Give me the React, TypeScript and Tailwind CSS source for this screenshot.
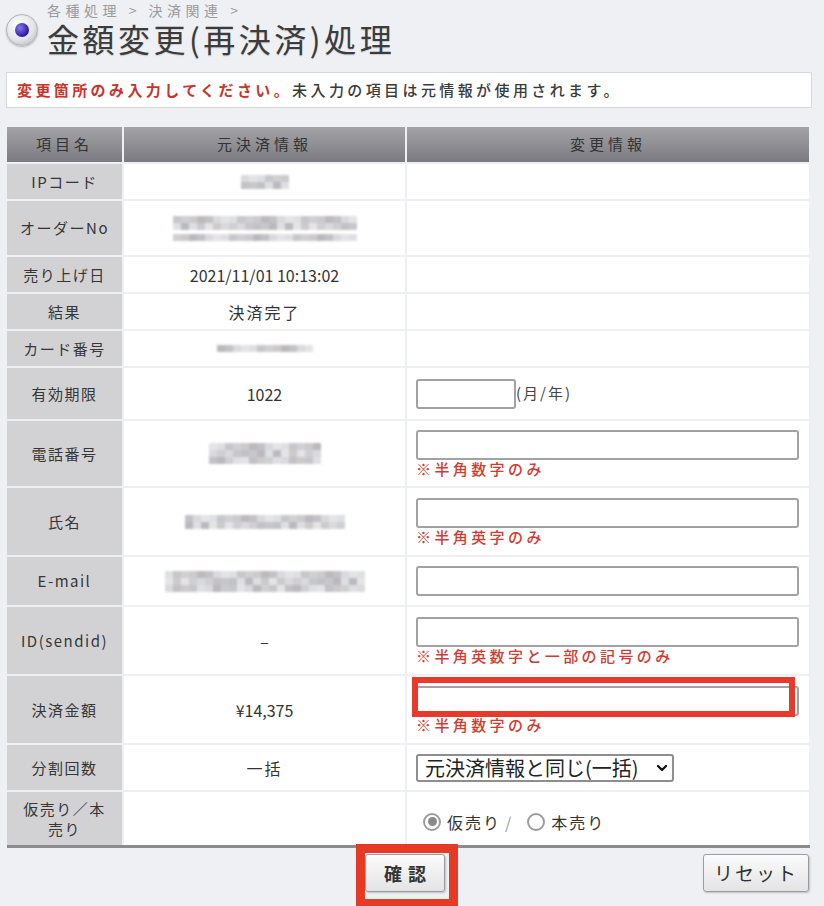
import React from 'react';
import { ChevronDown } from 'lucide-react';

const shades = ['#d6d6da', '#c2c1c6', '#b4b2b8', '#e2e2e5', '#cbcbcf', '#bcbbc0', '#dadde0', '#c8c6c4'];

// pixelated redaction block
const Mosaic = ({ cols, rows, offset = 0 }: { cols: number; rows: number; offset?: number }) => (
  <div className="flex flex-col blur-[0.8px] opacity-90">
    {Array.from({ length: rows }).map((_, r) => (
      <div key={r} className="flex">
        {Array.from({ length: cols }).map((__, c) => (
          <div
            key={c}
            className="w-[8px] h-[7px]"
            style={{ background: shades[(c * 3 + r * 5 + offset + ((c * r) % 3)) % shades.length] }}
          />
        ))}
      </div>
    ))}
  </div>
);

const Label = ({ h, children }: { h: string; children: React.ReactNode }) => (
  <div className={`${h} bg-[#d2d2d4] flex items-center justify-center text-center text-[15px] leading-[20px] tracking-[1.5px] text-[#363636] whitespace-nowrap`}>
    {children}
  </div>
);

const Value = ({ children }: { children?: React.ReactNode }) => (
  <div className="bg-white flex items-center justify-center text-[16px] text-[#333]">{children}</div>
);

const Change = ({ children }: { children?: React.ReactNode }) => (
  <div className="bg-white flex flex-col justify-center items-start pl-[9px]">{children}</div>
);

const TextBox = ({ className = 'w-[383px]' }: { className?: string }) => (
  <input
    type="text"
    className={`${className} h-[30px] bg-white border-2 border-[#a2a2a4] rounded-[3px] outline-none`}
  />
);

const Note = ({ children }: { children: React.ReactNode }) => (
  <div className="text-[15px] leading-[17px] tracking-[3.4px] text-[#d23a32] font-medium">{children}</div>
);

const Radio = ({ checked }: { checked?: boolean }) => (
  <span className="w-[18px] h-[18px] rounded-full border-2 border-[#9c9c9c] bg-white flex items-center justify-center">
    {checked && <span className="w-[9px] h-[9px] rounded-full bg-[#8a8a8a]" />}
  </span>
);

export default function App() {
  return (
    <div className="w-[824px] h-[906px] overflow-hidden bg-[#eef0f4] font-['Noto_Sans_CJK_JP','Noto_Sans',sans-serif] text-[#333]">
      {/* Title */}
      <div className="flex items-start pt-[2px]">
        <div className="ml-[6px] mt-[12px] w-[32px] h-[32px] rounded-full border border-[#b4b4b8] bg-[radial-gradient(circle_at_40%_35%,#ffffff,#e4e4e8_55%,#a9a9ae)] flex items-center justify-center shadow-[0_1px_2px_rgba(0,0,0,0.25)]">
          <div className="w-[14px] h-[14px] rounded-full bg-[radial-gradient(circle_at_35%_35%,#8577f0,#2a189c_70%)]" />
        </div>
        <div className="ml-[9px]">
          <div className="text-[14px] leading-[16px] tracking-[4.5px] text-[#9a9a9e]">各種処理 &gt; 決済関連 &gt;</div>
          <h1 className="mt-[2px] text-[32px] leading-[36px] tracking-[3.5px] text-[#3c3c3c] [text-shadow:0_1px_1px_rgba(0,0,0,0.15)]">
            金額変更(再決済)処理
          </h1>
        </div>
      </div>

      {/* Notice */}
      <div className="ml-[6px] mt-[16px] w-[806px] h-[36px] bg-white border border-[#d8d8dc] flex items-center pl-[10px] text-[15px] tracking-[3.4px]">
        <span className="text-[#c8342c] font-bold">変更箇所のみ入力してください。</span>
        <span className="text-[#3a3a3a] font-medium">未入力の項目は元情報が使用されます。</span>
      </div>

      {/* Table */}
      <div className="ml-[7px] mt-[19px] w-[802px] grid grid-cols-[115px_281px_1fr] gap-[2px]">
        <div className="h-[35px] bg-gradient-to-b from-[#a4a4a8] to-[#7a7a80] flex items-center justify-center text-[15px] tracking-[4px] text-[#333]">項目名</div>
        <div className="bg-gradient-to-b from-[#a4a4a8] to-[#7a7a80] flex items-center justify-center text-[15px] tracking-[4px] text-[#333]">元決済情報</div>
        <div className="bg-gradient-to-b from-[#a4a4a8] to-[#7a7a80] flex items-center justify-center text-[15px] tracking-[4px] text-[#333]">変更情報</div>

        <Label h="h-[35px]">IPコード</Label>
        <Value><Mosaic cols={6} rows={2} /></Value>
        <Change />

        <Label h="h-[54px]">オーダーNo</Label>
        <Value>
          <div className="flex flex-col gap-[4px]">
            <Mosaic cols={23} rows={2} offset={1} />
            <Mosaic cols={23} rows={1} offset={4} />
          </div>
        </Value>
        <Change />

        <Label h="h-[35px]">売り上げ日</Label>
        <Value>2021/11/01 10:13:02</Value>
        <Change />

        <Label h="h-[35px]">結果</Label>
        <Value><span className="tracking-[2px]">決済完了</span></Value>
        <Change />

        <Label h="h-[35px]">カード番号</Label>
        <Value><Mosaic cols={12} rows={1} offset={2} /></Value>
        <Change />

        <Label h="h-[51px]">有効期限</Label>
        <Value>1022</Value>
        <Change>
          <div className="flex items-center">
            <TextBox className="w-[100px]" />
            <span className="text-[15px] tracking-[2px] text-[#444]">(月/年)</span>
          </div>
        </Change>

        <Label h="h-[65px]">電話番号</Label>
        <Value><Mosaic cols={14} rows={3} offset={3} /></Value>
        <Change>
          <TextBox />
          <Note>※半角数字のみ</Note>
        </Change>

        <Label h="h-[67px]">氏名</Label>
        <Value><Mosaic cols={20} rows={2} offset={5} /></Value>
        <Change>
          <TextBox />
          <Note>※半角英字のみ</Note>
        </Change>

        <Label h="h-[48px]">E-mail</Label>
        <Value><Mosaic cols={25} rows={3} offset={6} /></Value>
        <Change>
          <TextBox />
        </Change>

        <Label h="h-[67px]">ID(sendid)</Label>
        <Value>–</Value>
        <Change>
          <TextBox />
          <Note>※半角英数字と一部の記号のみ</Note>
        </Change>

        <Label h="h-[67px]">決済金額</Label>
        <Value>¥14,375</Value>
        <Change>
          <div className="relative">
            <TextBox />
            <div className="absolute left-[-4px] top-[-9px] w-[383px] h-[40px] border-[6px] border-[#e8392a]" />
          </div>
          <Note>※半角数字のみ</Note>
        </Change>

        <Label h="h-[45px]">分割回数</Label>
        <Value><span className="tracking-[2px]">一括</span></Value>
        <Change>
          <div className="relative">
            <select className="appearance-none w-[258px] h-[28px] border-2 border-[#8e8e90] rounded-[3px] bg-white pl-[7px] text-[20px] leading-[24px] text-[#222] outline-none">
              <option>元決済情報と同じ(一括)</option>
            </select>
            <ChevronDown className="absolute right-[4px] top-[6px] w-[16px] h-[16px] text-[#111] pointer-events-none" strokeWidth={3.5} />
          </div>
        </Change>

        <Label h="h-[53px]">
          <span>仮売り／本<br />売り</span>
        </Label>
        <Value />
        <Change>
          <div className="flex items-center mt-[6px] pl-[7px] text-[16px] tracking-[2px] text-[#333]">
            <Radio checked />
            <span className="ml-[6px]">仮売り</span>
            <span className="ml-[4px] text-[#999]">/</span>
            <span className="ml-[14px]"><Radio /></span>
            <span className="ml-[6px]">本売り</span>
          </div>
        </Change>
      </div>
      <div className="ml-[7px] w-[803px] h-[3px] bg-[#8c8c90]" />

      {/* Buttons */}
      <div className="ml-[7px] w-[802px] mt-[6px] grid grid-cols-[1fr_auto_1fr] items-start">
        <div />
        <div className="relative mr-[6px]">
          <button className="w-[80px] h-[38px] bg-gradient-to-b from-[#fbfbfb] to-[#e4e4e6] border border-[#9c9c9e] rounded-[3px] shadow-[1px_1px_2px_rgba(0,0,0,0.2)] text-[18px] font-bold tracking-[6px] text-[#333] pl-[6px]">
            確認
          </button>
          <div className="absolute left-[-9px] top-[-10px] w-[102px] h-[64px] border-[9px] border-[#e53a24]" />
        </div>
        <div className="justify-self-end">
          <button className="w-[106px] h-[38px] bg-gradient-to-b from-[#fbfbfb] to-[#e4e4e6] border border-[#9c9c9e] rounded-[3px] shadow-[1px_1px_2px_rgba(0,0,0,0.2)] text-[19px] tracking-[2px] text-[#333]">
            リセット
          </button>
        </div>
      </div>
    </div>
  );
}
